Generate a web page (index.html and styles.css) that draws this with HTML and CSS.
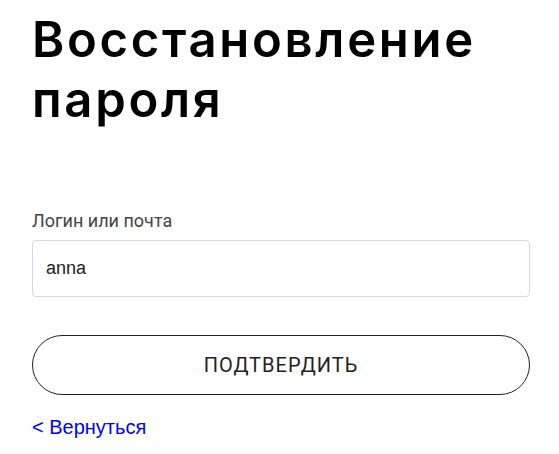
FILE: index.html
```html
<!DOCTYPE html>
<html lang="ru">
<head>
<meta charset="utf-8">
<link rel="stylesheet" href="styles.css">
</head>
<body>
<main class="page">
  <h1 class="title">Восстановление пароля</h1>
  <form class="form">
    <label class="label" for="login">Логин или почта</label>
    <input class="input" id="login" type="text" value="anna">
    <button class="btn" type="button">ПОДТВЕРДИТЬ</button>
    <a class="back" href="#">&lt; Вернуться</a>
  </form>
</main>
</body>
</html>
```
FILE: styles.css
```css
html, body {
  margin: 0;
  padding: 0;
  background: #fff;
}
.page {
  padding: 10px 29px 0 32px;
  font-family: "Liberation Sans", Arial, sans-serif;
}
.title {
  margin: 0;
  font-family: "Inter", sans-serif;
  font-weight: 600;
  font-size: 49px;
  line-height: 60px;
  color: #000;
  letter-spacing: 2.7px;
}
.form {
  display: flex;
  flex-direction: column;
  margin-top: 80px;
}
.label {
  font-family: "Roboto", sans-serif;
  font-size: 18px;
  line-height: 22px;
  color: #444;
  margin-bottom: 8px;
}
.input {
  box-sizing: border-box;
  height: 57px;
  border: 1px solid #d3d8e4;
  border-radius: 4px;
  padding: 0 13px;
  font-family: "Liberation Sans", Arial, sans-serif;
  font-size: 18px;
  color: #222;
  outline: none;
}
.btn {
  margin-top: 38px;
  height: 60px;
  box-sizing: border-box;
  border: 1px solid #222;
  border-radius: 30px;
  background: #fff;
  font-family: "Roboto", sans-serif;
  font-size: 20px;
  letter-spacing: 1px;
  color: #222;
}
.back {
  margin-top: 20px;
  align-self: flex-start;
  color: #0000f0;
  text-decoration: none;
  font-size: 20px;
  line-height: 24px;
}
```
